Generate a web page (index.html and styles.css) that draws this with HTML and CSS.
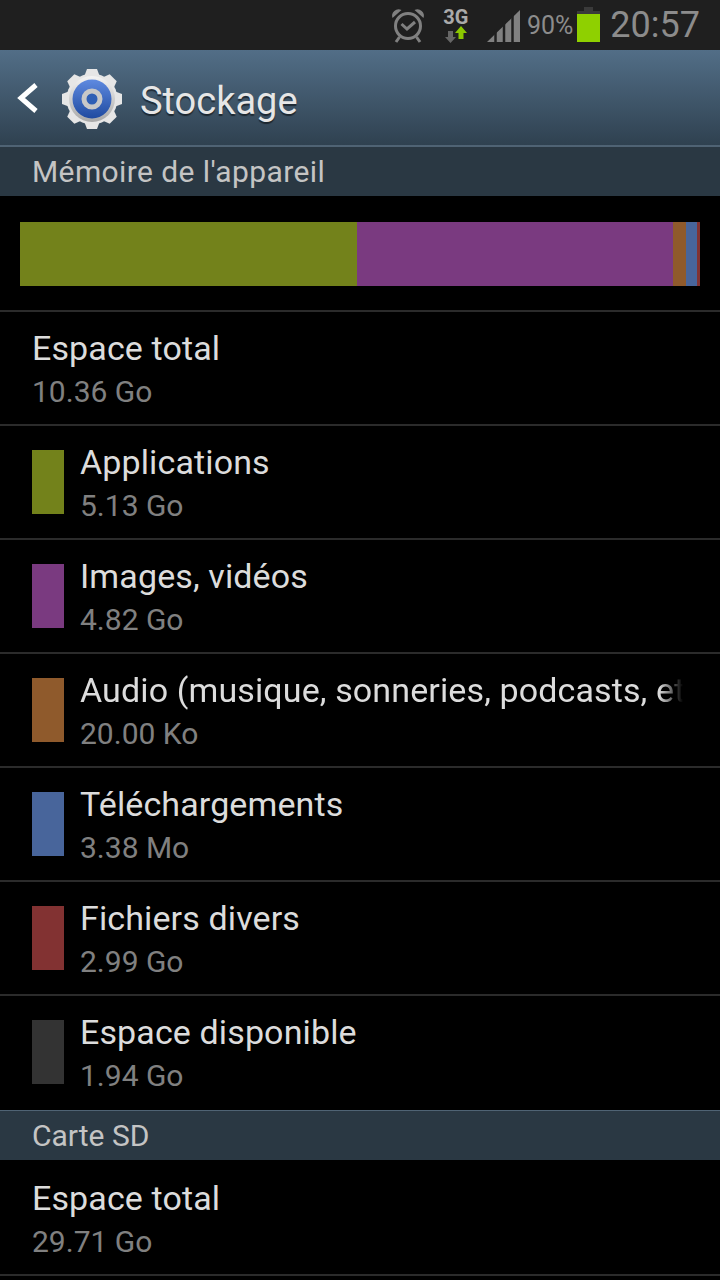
FILE: index.html
```html
<!DOCTYPE html>
<html lang="fr">
<head>
    <meta charset="UTF-8">
    <meta name="viewport" content="width=device-width, initial-scale=1.0">
    <title>Stockage</title>
    <link rel="stylesheet" href="styles.css">
</head>
<body>
    <div class="status-bar">
        <svg class="icon-alarm" width="36" height="36" viewBox="0 0 36 36">
            <circle cx="18" cy="19" r="12.5" fill="none" stroke="#808080" stroke-width="3"/>
            <path d="M11.500 17l5.500 5 8-7" fill="none" stroke="#808080" stroke-width="3"/>
            <path d="M2.500 11a6.500 6.500 0 0 1 9-8zM33.500 11a6.500 6.500 0 0 0-9-8z" fill="#808080"/>
            <path d="M9.500 30l-3.500 5M26.500 30l3.500 5" stroke="#808080" stroke-width="3"/>
        </svg>
        <div class="net">
            <span class="net-label">3G</span>
            <svg width="24" height="17" viewBox="0 0 24 17">
                <path d="M4 5h5v6h3l-5.500 6L1 11h3z" fill="#666"/>
                <path d="M17 0l6 7h-3.500v6h-5V7H11z" fill="#8cc800"/>
            </svg>
        </div>
        <svg class="icon-signal" width="34" height="34" viewBox="0 0 34 34">
            <path d="M0 33L33 1v32z" fill="#808080"/>
            <path d="M8.500 33V20M17 33V12M25.500 33V4" stroke="#1f1f1f" stroke-width="2.500"/>
        </svg>
        <span class="battery-text">90%</span>
        <div class="battery"></div>
        <span class="clock">20:57</span>
    </div>

    <header class="action-bar">
        <svg class="back" width="24" height="32" viewBox="0 0 24 32">
            <path d="M21 3L6 16l15 13" fill="none" stroke="#fff" stroke-width="5"/>
        </svg>
        <svg class="gear" width="64" height="64" viewBox="0 0 64 64">
            <defs>
                <linearGradient id="ring" x1="0" y1="0" x2="0" y2="1">
                    <stop offset="0" stop-color="#f4f4f4"/>
                    <stop offset="1" stop-color="#a8a8a8"/>
                </linearGradient>
                <linearGradient id="blue" x1="0" y1="0" x2="0" y2="1">
                    <stop offset="0" stop-color="#5f8ae0"/>
                    <stop offset="1" stop-color="#1f4aa0"/>
                </linearGradient>
                <path id="tooth" d="M24 10L27 2h10l3 8z"/>
            </defs>
            <g fill="#e6e6e6">
                <use href="#tooth"/>
                <use href="#tooth" transform="rotate(45 32 32)"/>
                <use href="#tooth" transform="rotate(90 32 32)"/>
                <use href="#tooth" transform="rotate(135 32 32)"/>
                <use href="#tooth" transform="rotate(180 32 32)"/>
                <use href="#tooth" transform="rotate(225 32 32)"/>
                <use href="#tooth" transform="rotate(270 32 32)"/>
                <use href="#tooth" transform="rotate(315 32 32)"/>
                <circle cx="32" cy="32" r="25.500"/>
            </g>
            <circle cx="32" cy="32" r="23" fill="url(#ring)"/>
            <circle cx="32" cy="32" r="19.500" fill="url(#blue)"/>
            <circle cx="32" cy="32" r="8" fill="#2f5fb5" stroke="#c8c8c8" stroke-width="5"/>
        </svg>
        <h1 class="title">Stockage</h1>
    </header>

    <div class="section section-wide">Mémoire de l'appareil</div>

    <div class="usage">
        <div class="usage-bar">
            <div class="seg green grow-apps"></div>
            <div class="seg purple grow-images"></div>
            <div class="seg brown grow-audio"></div>
            <div class="seg blue grow-dl"></div>
            <div class="seg red grow-misc"></div>
        </div>
    </div>

    <div class="row">
        <div class="row-text">
            <div class="row-title">Espace total</div>
            <div class="row-value">10.36 Go</div>
        </div>
    </div>
    <div class="row">
        <div class="swatch green"></div>
        <div class="row-text">
            <div class="row-title">Applications</div>
            <div class="row-value">5.13 Go</div>
        </div>
    </div>
    <div class="row">
        <div class="swatch purple"></div>
        <div class="row-text">
            <div class="row-title">Images, vidéos</div>
            <div class="row-value">4.82 Go</div>
        </div>
    </div>
    <div class="row">
        <div class="swatch brown"></div>
        <div class="row-text">
            <div class="row-title fade">Audio (musique, sonneries, podcasts, etc.)</div>
            <div class="row-value">20.00 Ko</div>
        </div>
    </div>
    <div class="row">
        <div class="swatch blue"></div>
        <div class="row-text">
            <div class="row-title">Téléchargements</div>
            <div class="row-value">3.38 Mo</div>
        </div>
    </div>
    <div class="row">
        <div class="swatch red"></div>
        <div class="row-text">
            <div class="row-title">Fichiers divers</div>
            <div class="row-value">2.99 Go</div>
        </div>
    </div>
    <div class="row no-line">
        <div class="swatch grey"></div>
        <div class="row-text">
            <div class="row-title">Espace disponible</div>
            <div class="row-value">1.94 Go</div>
        </div>
    </div>

    <div class="section">Carte SD</div>

    <div class="row">
        <div class="row-text">
            <div class="row-title">Espace total</div>
            <div class="row-value">29.71 Go</div>
        </div>
    </div>
</body>
</html>
```

FILE: styles.css
```css
* {
    margin: 0;
    padding: 0;
    box-sizing: border-box;
}

body {
    width: 720px;
    height: 1280px;
    overflow: hidden;
    background-color: #000;
    font-family: Roboto, "Liberation Sans", sans-serif;
    color: #e0e0e0;
}

.status-bar {
    height: 50px;
    background-color: #1f1f1f;
    display: flex;
    align-items: center;
    justify-content: flex-end;
    padding-right: 20px;
    color: #8c8c8c;
}

.net {
    display: flex;
    flex-direction: column;
    align-items: center;
    margin: 0 18px 0 17px;
    width: 26px;
}

.net-label {
    font-size: 20px;
    font-weight: 700;
    line-height: 18px;
    color: #aaa;
}

.icon-signal {
    margin-top: 2px;
}

.battery-text {
    font-size: 25px;
    margin-left: 6px;
}

.battery {
    width: 23px;
    height: 31px;
    margin: 3px 0 0 4px;
    background: linear-gradient(#3a3a3a 0 3px, #8fd000 3px);
    position: relative;
}

.battery::before {
    content: "";
    position: absolute;
    top: -4px;
    left: 7px;
    width: 9px;
    height: 4px;
    background-color: #3a3a3a;
}

.clock {
    font-size: 36px;
    margin-left: 10px;
}

.action-bar {
    height: 96px;
    display: flex;
    align-items: center;
    background: linear-gradient(#526e87, #2f4150);
    border-bottom: 1px solid #4f6374;
}

.back {
    margin-left: 15px;
}

.gear {
    margin: 3px 0 0 21px;
}

.title {
    font-size: 38px;
    font-weight: 400;
    color: #e6e6e6;
    margin: 7px 0 0 16px;
    text-shadow: 0 2px 1px rgba(0, 0, 0, 0.5);
}

.section {
    height: 50px;
    margin-bottom: 2px;
    padding-left: 32px;
    line-height: 50px;
    font-size: 30px;
    color: #c4c4c4;
    background-color: #2a3843;
    border-top: 1px solid #4f6374;
}

.section-wide {
    letter-spacing: 0.4px;
}

.usage {
    height: 114px;
    padding: 24px 20px 0;
    border-bottom: 2px solid #2b2b2b;
}

.usage-bar {
    display: flex;
    height: 64px;
    width: 680px;
}

.seg.grow-apps { width: 337px; }
.seg.grow-images { width: 316px; }
.seg.grow-audio { width: 13px; }
.seg.grow-dl { width: 11px; }
.seg.grow-misc { width: 3px; }

.green { background-color: #73821b; }
.purple { background-color: #7a3a80; }
.brown { background-color: #8f5a2c; }
.blue { background-color: #48659b; }
.red { background-color: #823232; }
.grey { background-color: #333; }

.row {
    height: 114px;
    display: flex;
    align-items: center;
    padding-left: 32px;
    border-bottom: 2px solid #2b2b2b;
}

.row.no-line {
    border-bottom-color: transparent;
}

.swatch {
    width: 32px;
    height: 64px;
    margin-right: 16px;
    flex-shrink: 0;
}

.row-text {
    min-width: 0;
    flex: 1;
    padding: 4px 37px 0 0;
}

.row-title {
    font-size: 34px;
    line-height: 44px;
    letter-spacing: 0.12px;
    color: #dcdcdc;
    white-space: nowrap;
    overflow: hidden;
}

.row-title.fade {
    -webkit-mask-image: linear-gradient(to left, transparent 0, #000 24px);
    mask-image: linear-gradient(to left, transparent 0, #000 24px);
}

.row-value {
    font-size: 30px;
    line-height: 44px;
    color: #808080;
}
```
